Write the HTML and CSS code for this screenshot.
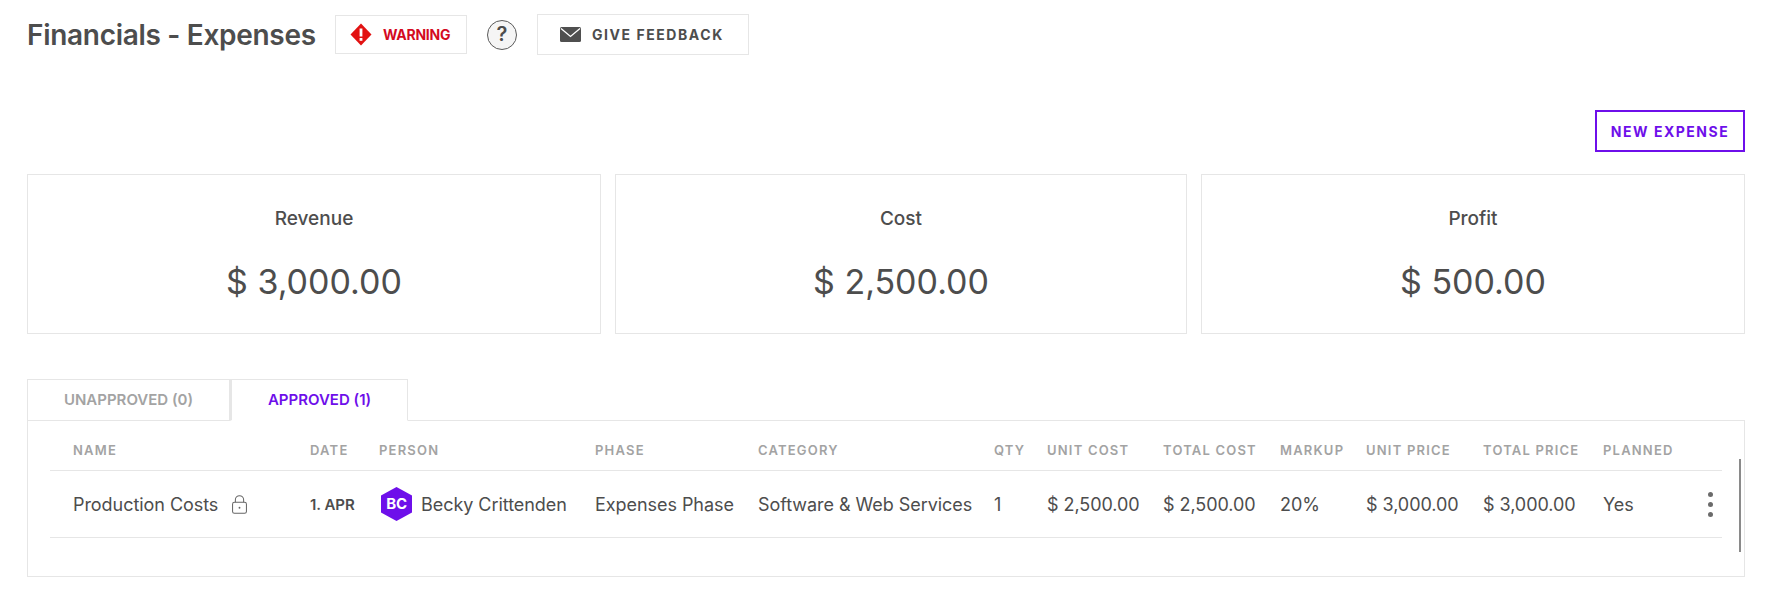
FILE: index.html
```html
<!DOCTYPE html>
<html lang="en">
<head>
<meta charset="UTF-8">
<title>Financials - Expenses</title>
<link rel="stylesheet" href="styles.css">
</head>
<body>
<header class="top-bar">
    <h1>Financials - Expenses</h1>
    <div class="warning">
        <svg width="22" height="23" viewBox="0 0 22 23"><path d="M11 0.5L21.5 11.5L11 22.5L0.5 11.5Z" fill="#e21212"/><rect x="9.6" y="5.5" width="2.8" height="8" fill="#fff"/><rect x="9.6" y="15" width="2.8" height="2.8" fill="#fff"/></svg>
        <span>WARNING</span>
    </div>
    <div class="help">?</div>
    <button class="feedback">
        <svg width="21" height="15" viewBox="0 0 21 15"><rect width="21" height="15" rx="1.5" fill="#4f4f4f"/><path d="M1 1.5L10.5 9.5L20 1.5" fill="none" stroke="#fff" stroke-width="1.3"/></svg>
        <span>GIVE FEEDBACK</span>
    </button>
</header>

<div class="actions">
    <button class="new-expense">NEW EXPENSE</button>
</div>

<section class="totals">
    <div class="total-card"><h2>Revenue</h2><div class="amount">$ 3,000.00</div></div>
    <div class="total-card"><h2>Cost</h2><div class="amount">$ 2,500.00</div></div>
    <div class="total-card"><h2>Profit</h2><div class="amount">$ 500.00</div></div>
</section>

<nav class="tabs">
    <div class="tab">UNAPPROVED (0)</div>
    <div class="tab active">APPROVED (1)</div>
</nav>

<section class="panel">
    <div class="row head">
        <div>NAME</div>
        <div>DATE</div>
        <div>PERSON</div>
        <div>PHASE</div>
        <div>CATEGORY</div>
        <div>QTY</div>
        <div>UNIT COST</div>
        <div>TOTAL COST</div>
        <div>MARKUP</div>
        <div>UNIT PRICE</div>
        <div>TOTAL PRICE</div>
        <div>PLANNED</div>
    </div>
    <div class="row item">
        <div class="name">
            Production Costs
            <svg width="15" height="19" viewBox="0 0 16 20"><rect x="0.6" y="7.6" width="14.8" height="11.8" rx="2" fill="none" stroke="#666" stroke-width="1.1"/><path d="M3.6 7.5V5A4.4 4.4 0 0 1 12.4 5V7.5" fill="none" stroke="#666" stroke-width="1.1"/><circle cx="8" cy="13.5" r="1" fill="#666"/></svg>
        </div>
        <div class="date">1. APR</div>
        <div class="person">
            <span class="avatar">
                <svg width="33" height="34" viewBox="0 0 33 34"><path d="M16.5 0L32 8.5V25.5L16.5 34L1 25.5V8.5Z" fill="#6e0fea"/></svg>
                <b>BC</b>
            </span>
            Becky Crittenden
        </div>
        <div>Expenses Phase</div>
        <div>Software &amp; Web Services</div>
        <div>1</div>
        <div>$ 2,500.00</div>
        <div>$ 2,500.00</div>
        <div>20%</div>
        <div>$ 3,000.00</div>
        <div>$ 3,000.00</div>
        <div>Yes</div>
        <div class="more"><i></i><i></i><i></i></div>
    </div>
    <div class="scroll-thumb"></div>
</section>
</body>
</html>
```

FILE: styles.css
```css
body {
    font-family: Inter, "Liberation Sans", sans-serif;
    background-color: #fff;
    color: #4d4d4d;
    margin: 0;
    padding: 14px 23px 0 27px;
}

button {
    font-family: inherit;
    background: #fff;
    cursor: pointer;
}

.top-bar {
    display: flex;
    align-items: center;
    height: 41px;
}

.top-bar h1 {
    font-size: 28px;
    font-weight: 600;
    letter-spacing: -0.3px;
    margin: 0;
    width: 308px;
    white-space: nowrap;
}

.warning {
    display: flex;
    align-items: center;
    gap: 11px;
    box-sizing: border-box;
    width: 132px;
    height: 39px;
    padding-left: 14px;
    border: 1px solid #e6e6e6;
    color: #d40b1f;
    font-size: 14px;
    font-weight: 700;
    letter-spacing: -0.25px;
}

.help {
    box-sizing: border-box;
    width: 30px;
    height: 30px;
    margin-left: 20px;
    border: 1.5px solid #5a5a5a;
    border-radius: 50%;
    background-color: #f5f5f5;
    font-size: 20px;
    font-weight: 600;
    line-height: 27px;
    text-align: center;
}

.feedback {
    display: flex;
    align-items: center;
    gap: 11px;
    box-sizing: border-box;
    width: 212px;
    height: 41px;
    margin-left: 20px;
    padding: 0 0 0 22px;
    border: 1px solid #e6e6e6;
    color: #4d4d4d;
    font-size: 14px;
    font-weight: 700;
    letter-spacing: 1.55px;
}

.actions {
    display: flex;
    justify-content: flex-end;
    margin-top: 55px;
}

.new-expense {
    box-sizing: border-box;
    width: 150px;
    height: 42px;
    padding: 0;
    border: 2px solid #6e0fea;
    color: #6e0fea;
    font-size: 14px;
    font-weight: 700;
    letter-spacing: 1.5px;
}

.totals {
    display: grid;
    grid-template-columns: 574px 572px 1fr;
    gap: 14px;
    margin-top: 22px;
}

.total-card {
    box-sizing: border-box;
    height: 160px;
    padding-top: 33px;
    border: 1px solid #e6e6e6;
    text-align: center;
}

.total-card h2 {
    font-size: 19px;
    font-weight: 500;
    line-height: 22px;
    margin: 0;
}

.amount {
    font-size: 34px;
    font-weight: 400;
    line-height: 40px;
    margin-top: 32px;
}

.tabs {
    display: flex;
    margin-top: 45px;
}

.tab {
    box-sizing: border-box;
    height: 42px;
    width: 203px;
    border: 1px solid #e6e6e6;
    color: #a3a3a3;
    font-size: 15px;
    font-weight: 600;
    line-height: 40px;
    text-align: center;
}

.tab.active {
    width: 178px;
    border-left-width: 2px;
    border-bottom-color: #fff;
    color: #6e0fea;
    position: relative;
    z-index: 1;
}

.panel {
    box-sizing: border-box;
    height: 157px;
    margin-top: -1px;
    padding: 0 22px;
    border: 1px solid #e6e6e6;
    position: relative;
}

.row {
    display: grid;
    grid-template-columns: 237px 69px 216px 163px 236px 53px 116px 117px 86px 117px 120px 90px 1fr;
    padding-left: 23px;
    border-bottom: 1px solid #e6e6e6;
    align-items: center;
    white-space: nowrap;
}

.row.head {
    box-sizing: border-box;
    height: 50px;
    padding-top: 8px;
    color: #a3a3a3;
    font-size: 13px;
    font-weight: 600;
    letter-spacing: 1.2px;
}

.row.item {
    height: 66px;
    font-size: 18px;
    letter-spacing: -0.05px;
}

.name {
    display: flex;
    align-items: center;
    gap: 14px;
}

.date {
    font-size: 15px;
    font-weight: 600;
}

.person {
    display: flex;
    align-items: center;
    gap: 8px;
    margin-left: 1px;
}

.avatar {
    display: flex;
    position: relative;
}

.avatar b {
    position: absolute;
    inset: 0;
    color: #fff;
    font-size: 15px;
    font-weight: 700;
    letter-spacing: -0.3px;
    line-height: 34px;
    text-align: center;
}

.more {
    display: flex;
    flex-direction: column;
    gap: 5px;
    align-items: center;
    width: 20px;
    margin-left: 7px;
}

.more i {
    width: 5px;
    height: 5px;
    border-radius: 50%;
    background-color: #6b6b6b;
}

.scroll-thumb {
    position: absolute;
    top: 38px;
    right: 3px;
    width: 2px;
    height: 93px;
    background-color: #8a8a8a;
}
```
